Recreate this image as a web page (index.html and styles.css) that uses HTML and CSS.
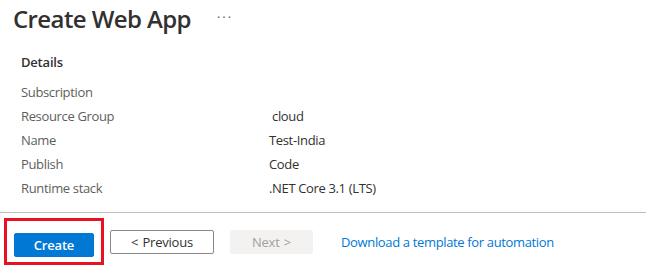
FILE: index.html
```html
<!DOCTYPE html>
<html>
<head>
<meta charset="utf-8">
<link rel="stylesheet" href="styles.css">
</head>
<body>
<div class="page">
  <header class="header">
    <h1 class="title">Create Web App</h1>
    <span class="more">···</span>
  </header>
  <section class="details">
    <div class="section-title">Details</div>
    <div class="row"><div class="label">Subscription</div><div class="value"></div></div>
    <div class="row"><div class="label">Resource Group</div><div class="value">&nbsp;cloud</div></div>
    <div class="row"><div class="label">Name</div><div class="value">Test-India</div></div>
    <div class="row"><div class="label">Publish</div><div class="value">Code</div></div>
    <div class="row"><div class="label">Runtime stack</div><div class="value">.NET Core 3.1 (LTS)</div></div>
  </section>
  <footer class="footer">
    <div class="highlight">
      <button class="btn btn-primary">Create</button>
    </div>
    <button class="btn btn-default">&lt; Previous</button>
    <button class="btn btn-disabled">Next &gt;</button>
    <a class="link" href="#">Download a template for automation</a>
  </footer>
</div>
</body>
</html>
```
FILE: styles.css
```css
* { box-sizing: border-box; }
html, body { margin: 0; padding: 0; background: #fff; }
body {
  font-family: "Open Sans", "Noto Sans", "Liberation Sans", sans-serif;
  color: #323130;
  font-size: 13px;
}
.page { width: 646px; height: 271px; overflow: hidden; }
.header {
  display: flex;
  align-items: center;
  height: 38px;
  padding-left: 13px;
}
.title {
  margin: 0;
  font-size: 24px;
  font-weight: 600;
  letter-spacing: -0.6px;
  line-height: 38px;
  color: #323130;
}
.more {
  margin-left: 26px;
  font-size: 13px;
  font-weight: 400;
  color: #605e5c;
  letter-spacing: 2px;
  position: relative;
  top: -2px;
}
.details {
  padding-left: 21px;
  padding-top: 12px;
  height: 175px;
  border-bottom: 1px solid #bdbdbd;
}
.section-title {
  font-weight: 600;
  font-size: 13px;
  line-height: 24px;
  height: 30px;
  letter-spacing: -0.2px;
}
.row {
  display: flex;
  height: 24px;
  line-height: 24px;
  letter-spacing: -0.35px;
}
.label { width: 248px; color: #605e5c; }
.value { color: #323130; }
.footer {
  display: flex;
  align-items: center;
  padding-left: 4px;
  padding-top: 5px;
}
.highlight {
  border: 3px solid #e81123;
  padding: 12px 7px 5px 7px;
  width: 100px;
  height: 47px;
}
.btn {
  font-family: inherit;
  height: 24px;
  font-size: 13px;
  font-weight: 500;
  border-radius: 2px;
  padding: 0;
  letter-spacing: -0.2px;
  word-spacing: 1px;
}
.btn-primary {
  width: 80px;
  background: #0078d4;
  border: 1px solid #0078d4;
  color: #fff;
  font-weight: 600;
}
.btn-default {
  margin-left: 6px;
  width: 104px;
  background: #fff;
  border: 1px solid #8a8886;
  color: #323130;
}
.btn-disabled {
  margin-left: 16px;
  width: 83px;
  background: #f3f2f1;
  border: 1px solid #f3f2f1;
  color: #a19f9d;
}
.link {
  margin-left: 28px;
  color: #0078d4;
  text-decoration: none;
  letter-spacing: -0.35px;
}
```
